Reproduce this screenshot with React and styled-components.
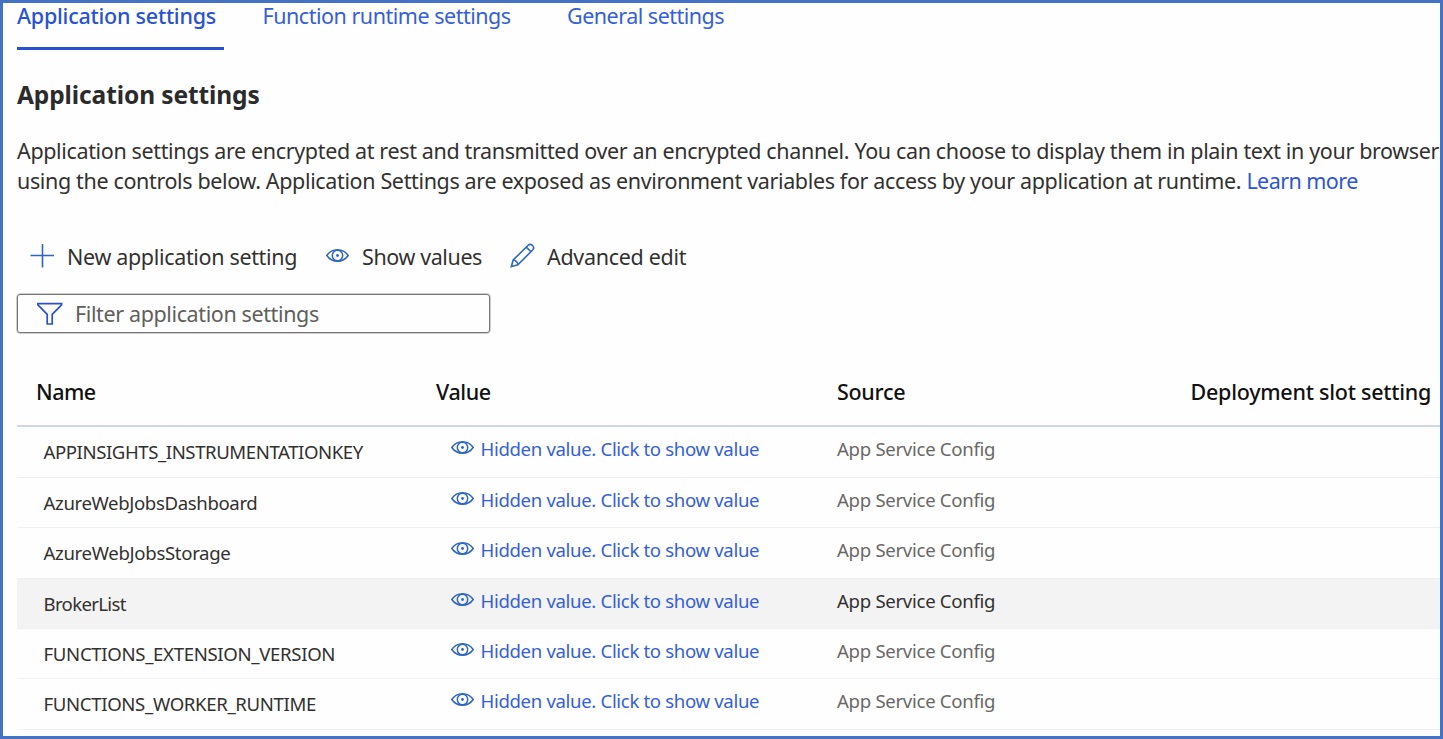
import React from "react";
import styled, { createGlobalStyle } from "styled-components";

const GlobalStyle = createGlobalStyle`
  *, *::before, *::after { box-sizing: border-box; }
  body {
    margin: 0;
    background: #fff;
    color: #323130;
    font-family: "Segoe UI", "Noto Sans", "Open Sans", sans-serif;
    overflow: hidden;
  }
`;

const Frame = styled.main`
  width: 1443px;
  height: 739px;
  border: 3px solid #4472c4;
  padding-left: 14px;
  background: #fefefe;
  overflow: hidden;
`;

const Tabs = styled.nav`
  display: grid;
  grid-template-columns: 207px 266px auto;
  justify-content: start;
  column-gap: 38.5px;
  height: 47px;
`;

const Tab = styled.a`
  padding-top: 2px;
  border-bottom: 3px solid ${(p) => (p.$active ? "#2851d3" : "transparent")};
  color: ${(p) => (p.$active ? "#2851d3" : "#3560d6")};
  font-size: 21.5px;
  font-weight: ${(p) => (p.$active ? 550 : 400)};
  line-height: 22px;
  letter-spacing: ${(p) => p.$track}px;
  white-space: nowrap;
`;

const Title = styled.h1`
  margin: 30px 0 0;
  font-size: 24.5px;
  font-weight: 700;
  line-height: 30px;
  letter-spacing: -0.1px;
  color: #2b2b2b;
`;

const Intro = styled.p`
  margin: 26px 0 0;
  font-size: 21.5px;
  line-height: 30px;
`;

const Line = styled.span`
  display: block;
  white-space: nowrap;
  letter-spacing: ${(p) => p.$track}px;
`;

const Link = styled.a`
  color: #2c56d6;
  letter-spacing: -0.55px;
`;

const Toolbar = styled.div`
  display: flex;
  align-items: center;
  height: 30px;
  margin-top: 46px;
  padding-left: 13px;
`;

const Command = styled.button`
  display: flex;
  align-items: center;
  gap: ${(p) => p.$gap}px;
  width: ${(p) => p.$width}px;
  height: 30px;
  padding: 0;
  border: 0;
  background: none;
  color: inherit;
  font: inherit;
  font-size: 21.5px;
  line-height: 30px;
  letter-spacing: ${(p) => p.$track}px;
  white-space: nowrap;

  svg { margin-bottom: 3px; }
`;

const FilterBox = styled.div`
  display: flex;
  align-items: center;
  gap: 12px;
  width: 473px;
  height: 39px;
  margin-top: 22px;
  padding-left: 18px;
  border: 1.5px solid #767676;
  border-radius: 3px;
  box-shadow: 0 0 0 0.5px #a0a0a0;
  color: #605e5c;
  font-size: 21.5px;
  line-height: 30px;
  letter-spacing: -0.38px;
`;

const Glyph = styled.svg`
  display: block;
  flex: none;
  overflow: visible;
  fill: none;
  stroke: ${(p) => p.$color || "#2f67c0"};
  stroke-width: ${(p) => p.$weight || 1.5};
`;

const Table = styled.div`
  margin-top: 26px;
`;

const HeadRow = styled.div`
  display: grid;
  grid-template-columns: 400px 401px 353.5px 1fr;
  align-items: center;
  height: 68.2px;
  padding-left: 19px;
  border-bottom: 2px solid #d0d7de;
  color: #111;
  font-size: 21.5px;
  font-weight: 550;
  line-height: 30px;
`;

const HeadCell = styled.span`
  white-space: nowrap;
  letter-spacing: ${(p) => p.$track}px;
`;

const Row = styled.div`
  display: grid;
  grid-template-columns: 407px 386.5px 1fr;
  height: 50.45px;
  padding-left: 26.5px;
  border-bottom: 1px solid #f0f0f0;
  background: ${(p) => (p.$selected ? "#f3f3f3" : "transparent")};
  font-size: 18.6px;
  line-height: 26px;
`;

const NameCell = styled.span`
  padding-top: 12px;
  white-space: nowrap;
  letter-spacing: ${(p) => p.$track}px;
`;

const ValueCell = styled.a`
  display: flex;
  align-items: flex-start;
  gap: 7px;
  padding-top: 9px;
  color: #3560d6;
  white-space: nowrap;
  letter-spacing: -0.34px;

  svg { margin-top: 5px; }
`;

const SourceCell = styled.span`
  padding-top: 9px;
  color: ${(p) => (p.$selected ? "#323130" : "#6a6866")};
  white-space: nowrap;
  letter-spacing: -0.3px;
`;

const EyeIcon = () => (
  <Glyph width="23" height="13" viewBox="0 0 23 13">
    <path d="M0.8 6.5C3.5 2.6 7.2 0.8 11.5 0.8S19.5 2.6 22.2 6.5C19.5 10.4 15.8 12.2 11.5 12.2S3.5 10.4 0.8 6.5Z" />
    <circle cx="11.5" cy="6.5" r="5.2" />
    <circle cx="11.5" cy="6.5" r="1.4" fill="#2f67c0" stroke="none" />
  </Glyph>
);

const PlusIcon = () => (
  <Glyph width="25" height="24" viewBox="0 0 25 24" $weight={1.6}>
    <path d="M0.5 11.5H24M12.5 0V23.5" />
  </Glyph>
);

const PencilIcon = () => (
  <Glyph width="24" height="24" viewBox="0 0 24 24" $weight={1.6}>
    <path d="M1.3 22.7L3.2 16L17.9 1.5C19.3 0.2 21.2 0.3 22.5 1.5S23.8 4.7 22.6 6L7.9 20.8Z" />
    <path d="M3.2 16C5.2 15.9 7.9 18.3 7.9 20.8M16.3 3.1L21 7.7" />
  </Glyph>
);

const FunnelIcon = () => (
  <Glyph width="27" height="24" viewBox="0 0 27 24" $color="#2851d3" $weight={1.7}>
    <path d="M1.9 1.6H25.6V2.9L16.2 12.3V22H11.2V12.3L1.9 2.9Z" />
  </Glyph>
);

const settings = [
  { name: "APPINSIGHTS_INSTRUMENTATIONKEY", track: -0.43 },
  { name: "AzureWebJobsDashboard", track: -0.37 },
  { name: "AzureWebJobsStorage", track: -0.33 },
  { name: "BrokerList", track: -0.66, selected: true },
  { name: "FUNCTIONS_EXTENSION_VERSION", track: -0.33 },
  { name: "FUNCTIONS_WORKER_RUNTIME", track: -0.35 },
];

export default function App() {
  return (
    <>
      <GlobalStyle />
      <Frame>
        <Tabs>
          <Tab $active $track={-0.24}>Application settings</Tab>
          <Tab $track={-0.48}>Function runtime settings</Tab>
          <Tab $track={-0.5}>General settings</Tab>
        </Tabs>
        <Title>Application settings</Title>
        <Intro>
          <Line $track={-0.356}>
            Application settings are encrypted at rest and transmitted over an encrypted channel. You can choose to display them in plain text in your browser
          </Line>
          <Line $track={-0.357}>
            using the controls below. Application Settings are exposed as environment variables for access by your application at runtime. <Link>Learn more</Link>
          </Line>
        </Intro>
        <Toolbar>
          <Command $width={296} $gap={12} $track={-0.33}>
            <PlusIcon />
            New application setting
          </Command>
          <Command $width={184} $gap={13} $track={-0.4}>
            <EyeIcon />
            Show values
          </Command>
          <Command $width={180} $gap={13} $track={-0.3}>
            <PencilIcon />
            Advanced edit
          </Command>
        </Toolbar>
        <FilterBox>
          <FunnelIcon />
          Filter application settings
        </FilterBox>
        <Table>
          <HeadRow>
            <HeadCell $track={-0.5}>Name</HeadCell>
            <HeadCell $track={-0.4}>Value</HeadCell>
            <HeadCell $track={-0.3}>Source</HeadCell>
            <HeadCell $track={-0.25}>Deployment slot setting</HeadCell>
          </HeadRow>
          {settings.map((s) => (
            <Row key={s.name} $selected={s.selected}>
              <NameCell $track={s.track}>{s.name}</NameCell>
              <ValueCell>
                <EyeIcon />
                Hidden value. Click to show value
              </ValueCell>
              <SourceCell $selected={s.selected}>App Service Config</SourceCell>
            </Row>
          ))}
        </Table>
      </Frame>
    </>
  );
}
